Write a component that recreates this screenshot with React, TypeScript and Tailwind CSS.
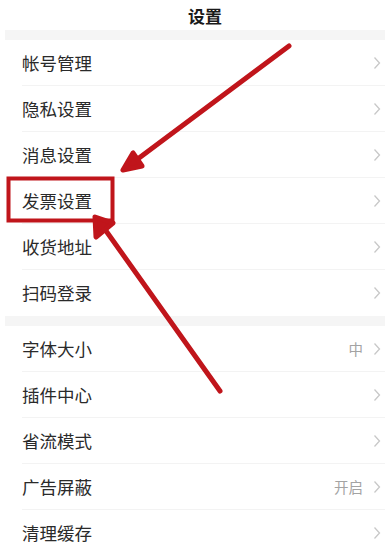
import React from 'react';

type Row = { label: string; value?: string };

const groups: Row[][] = [
  [
    { label: '帐号管理' },
    { label: '隐私设置' },
    { label: '消息设置' },
    { label: '发票设置' },
    { label: '收货地址' },
    { label: '扫码登录' },
  ],
  [
    { label: '字体大小', value: '中' },
    { label: '插件中心' },
    { label: '省流模式' },
    { label: '广告屏蔽', value: '开启' },
    { label: '清理缓存' },
  ],
];

function Chevron() {
  return (
    <svg width="8" height="14" viewBox="0 0 8 14" className="shrink-0">
      <path d="M1.5 1.5 L6.5 7 L1.5 12.5" fill="none" stroke="#c8c8c8" strokeWidth="1.3" />
    </svg>
  );
}

function SettingRow({ row, last }: { row: Row; last: boolean }) {
  return (
    <div className="relative flex h-[46px] items-center pl-[22px] pr-[4px]">
      <span className="flex-1 text-[17.5px] leading-none text-[#2a2a2a]">{row.label}</span>
      {row.value && <span className="mr-[10px] text-[14.5px] leading-none text-[#a3a3a3]">{row.value}</span>}
      <Chevron />
      {!last && <div className="absolute bottom-0 left-[22px] right-0 h-px bg-[#f3f3f3]" />}
    </div>
  );
}

export default function App() {
  return (
    <div
      className="relative h-[553px] w-[385px] overflow-hidden bg-white"
      style={{ fontFamily: '"Noto Sans CJK SC", "Noto Sans", sans-serif' }}
    >
      <div className="flex h-[30px] items-center justify-center pl-[25px]">
        <span className="text-[17px] font-bold leading-none text-[#1a1a1a]">设置</span>
      </div>
      {groups.map((g, gi) => (
        <div key={gi}>
          <div className="ml-[5px] h-[10px] bg-[#f5f5f5]" />
          {g.map((row, i) => (
            <SettingRow key={row.label} row={row} last={i === g.length - 1} />
          ))}
        </div>
      ))}

      {/* annotation overlay */}
      <svg className="pointer-events-none absolute inset-0" width="385" height="553" viewBox="0 0 385 553">
        <rect x="8.5" y="178.5" width="104" height="42" fill="none" stroke="#c0151b" strokeWidth="4" />
        <g stroke="#c0151b" strokeWidth="5" strokeLinecap="round" strokeLinejoin="round" fill="none">
          <line x1="289" y1="46" x2="127" y2="167" />
          <polygon points="133,153 123,170 142,166" fill="#c0151b" />
          <line x1="220" y1="391" x2="99" y2="221" />
          <polygon points="96,237 95,217 113,223" fill="#c0151b" />
        </g>
      </svg>
    </div>
  );
}
